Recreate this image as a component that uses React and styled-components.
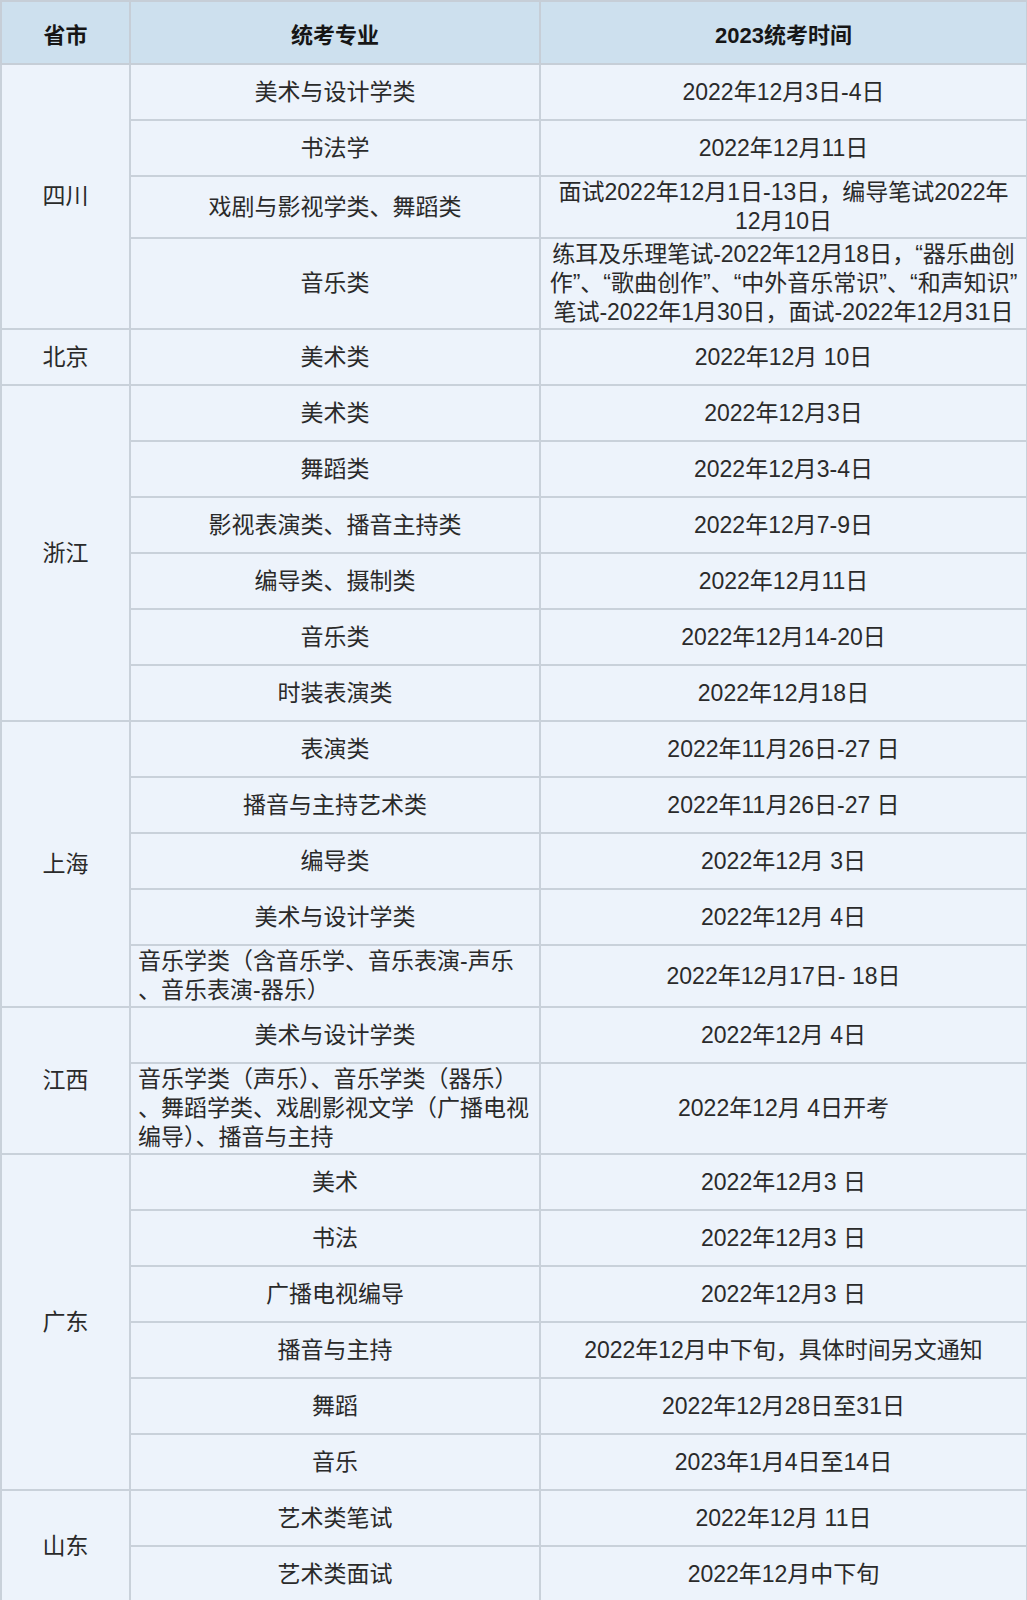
import React from 'react'
import styled, {createGlobalStyle} from 'styled-components'

const GlobalStyle=createGlobalStyle`
  html, body {
    margin: 0;
    padding: 0;
    background: #ffffff;
  }
  body {
    font-family: "Liberation Sans", "Noto Sans CJK SC", sans-serif;
  }
`

//data for the table, one block per province
const data=[
    {p: '四川', rows: [
        {m: '美术与设计学类', t: '2022年12月3日-4日'},
        {m: '书法学', t: '2022年12月11日'},
        {m: '戏剧与影视学类、舞蹈类', t: ['面试2022年12月1日-13日，编导笔试2022年', '12月10日'], h: 62},
        {m: '音乐类', t: ['练耳及乐理笔试-2022年12月18日，“器乐曲创', '作”、“歌曲创作”、“中外音乐常识”、“和声知识”', '笔试-2022年1月30日，面试-2022年12月31日'], h: 91},
    ]},
    {p: '北京', rows: [
        {m: '美术类', t: '2022年12月 10日'},
    ]},
    {p: '浙江', rows: [
        {m: '美术类', t: '2022年12月3日'},
        {m: '舞蹈类', t: '2022年12月3-4日'},
        {m: '影视表演类、播音主持类', t: '2022年12月7-9日'},
        {m: '编导类、摄制类', t: '2022年12月11日'},
        {m: '音乐类', t: '2022年12月14-20日'},
        {m: '时装表演类', t: '2022年12月18日'},
    ]},
    {p: '上海', rows: [
        {m: '表演类', t: '2022年11月26日-27 日'},
        {m: '播音与主持艺术类', t: '2022年11月26日-27 日'},
        {m: '编导类', t: '2022年12月 3日'},
        {m: '美术与设计学类', t: '2022年12月 4日'},
        {m: ['音乐学类（含音乐学、音乐表演-声乐', '、音乐表演-器乐）'], t: '2022年12月17日- 18日', h: 62, left: true},
    ]},
    {p: '江西', rows: [
        {m: '美术与设计学类', t: '2022年12月 4日'},
        {m: ['音乐学类（声乐）、音乐学类（器乐）', '、舞蹈学类、戏剧影视文学（广播电视', '编导）、播音与主持'], t: '2022年12月 4日开考', h: 91, left: true},
    ]},
    {p: '广东', rows: [
        {m: '美术', t: '2022年12月3 日'},
        {m: '书法', t: '2022年12月3 日'},
        {m: '广播电视编导', t: '2022年12月3 日'},
        {m: '播音与主持', t: '2022年12月中下旬，具体时间另文通知'},
        {m: '舞蹈', t: '2022年12月28日至31日'},
        {m: '音乐', t: '2023年1月4日至14日'},
    ]},
    {p: '山东', rows: [
        {m: '艺术类笔试', t: '2022年12月 11日'},
        {m: '艺术类面试', t: '2022年12月中下旬'},
    ]},
]

//render a cell text that may hold several fixed lines
const Lines=({text}) => {
    if (!Array.isArray(text)) return text
    return text.map((line, i) => <Line key={i}>{line}</Line>)
}

const App=() => {
    return (
        <Page>
            <GlobalStyle />
            <Table>
                <colgroup>
                    <col style={{width: '129px'}} />
                    <col style={{width: '410px'}} />
                    <col style={{width: '487px'}} />
                </colgroup>
                <thead>
                    <Row $h={63}>
                        <Head>省市</Head>
                        <Head>统考专业</Head>
                        <Head>2023统考时间</Head>
                    </Row>
                </thead>
                <tbody>
                    {data.map(group => group.rows.map((row, i) => (
                        <Row key={group.p+i} $h={row.h||56}>
                            {i===0&&<Province rowSpan={group.rows.length}>{group.p}</Province>}
                            <Cell $left={row.left}><Lines text={row.m} /></Cell>
                            <Cell><Lines text={row.t} /></Cell>
                        </Row>
                    )))}
                </tbody>
            </Table>
        </Page>
    )
}

export default App

//Styled components.
const Page=styled.div`
  width: 1027px;
  height: 1600px;
  overflow: hidden;
  background: #ffffff;
`

const Table=styled.table`
  width: 1026px;
  table-layout: fixed;
  border-collapse: collapse;
  border: 2px solid #c6ced7;
  background-color: #edf3fb;
  color: #2a2a2a;
  font-size: 23px;
`

const Row=styled.tr`
  height: ${props => props.$h}px;
`

const Head=styled.th`
  background-color: #cde0ee;
  border: 2px solid #c6ced7;
  color: #161616;
  font-size: 22px;
  font-weight: bold;
  text-align: center;
  vertical-align: middle;
  padding: 0;
`

const Cell=styled.td`
  border: 2px solid #c9d1da;
  text-align: ${props => props.$left ? 'left' : 'center'};
  vertical-align: middle;
  padding: ${props => props.$left ? '0 0 0 7px' : '0 2px'};
  line-height: 29px;
  white-space: nowrap;
  overflow: hidden;
`

const Province=styled(Cell)`
  padding: 0;
`

const Line=styled.span`
  display: block;
`
